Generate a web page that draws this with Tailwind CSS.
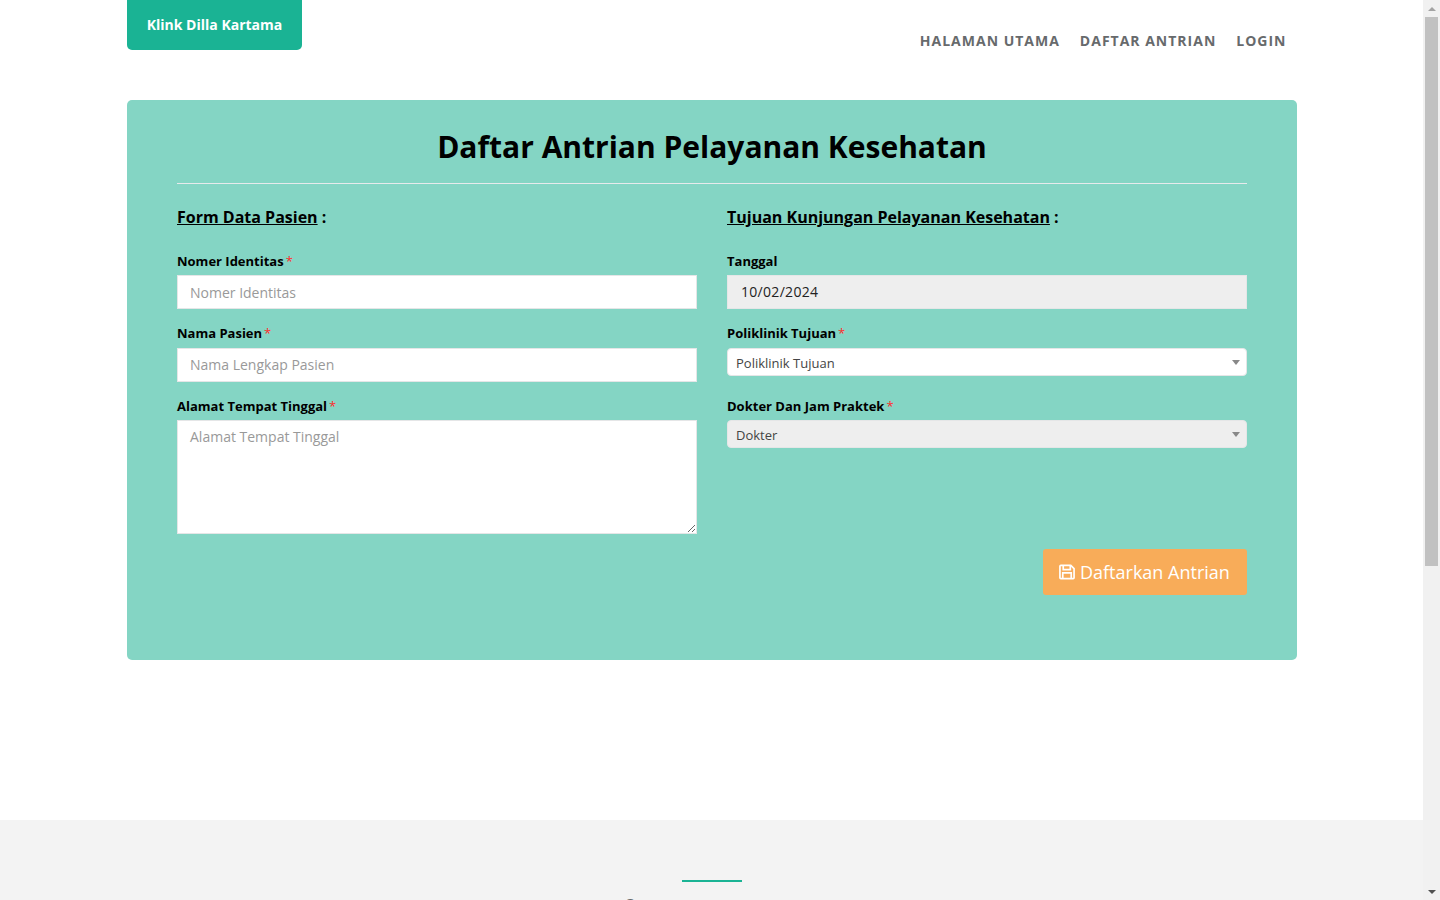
<!doctype html>
<html lang="id">
<head>
<meta charset="utf-8">
<title>Klinik Dilla Kartama</title>
<script src="https://cdn.jsdelivr.net/npm/@tailwindcss/browser@4"></script>
</head>
<body class="font-['Open_Sans',sans-serif] text-[14px] overflow-hidden">
<div class="flex h-[900px] w-[1440px] overflow-hidden">
  <main class="w-[1423px] h-[900px] overflow-hidden bg-white flex flex-col shrink-0">
    <header class="h-[100px] pl-[127px] pr-[136.5px] flex justify-between items-start shrink-0">
      <a class="w-[175px] h-[50px] pb-[2px] bg-[#1ab394] rounded-b-[5px] flex items-center justify-center text-white font-bold text-[14px]">Klink Dilla Kartama</a>
      <nav class="flex gap-[20px] pt-[31px] text-[14px] leading-[20px] font-bold tracking-[1px] text-[#676a6c]">
        <a>HALAMAN UTAMA</a>
        <a>DAFTAR ANTRIAN</a>
        <a>LOGIN</a>
      </nav>
    </header>
    <section class="ml-[127px] w-[1170px] h-[560px] shrink-0 bg-[#84d5c4] rounded-[5px] px-[50px] text-black">
      <h1 class="h-[84px] border-b border-[#e7eaec] text-center text-[30px] font-bold leading-[41px] pt-[26px]">Daftar Antrian Pelayanan Kesehatan</h1>
      <div class="grid grid-cols-2 gap-[30px]">
        <div>
          <h2 class="mt-[22px] h-[24px] text-[16px] font-bold leading-[22px]"><u>Form Data Pasien</u> :</h2>
          <label class="block mt-[21px] h-[24px] text-[13px] font-bold leading-[20px]">Nomer Identitas<span class="text-[#ff2a2a] font-normal ml-[2px]">*</span></label>
          <input class="block w-full h-[34px] border border-[#e5e6e7] bg-white px-[12px] text-[14px] text-[#676a6c] placeholder:text-[#999]" placeholder="Nomer Identitas">
          <label class="block mt-[14px] h-[25px] text-[13px] font-bold leading-[20px]">Nama Pasien<span class="text-[#ff2a2a] font-normal ml-[2px]">*</span></label>
          <input class="block w-full h-[34px] pb-[2px] border border-[#e5e6e7] bg-white px-[12px] text-[14px] text-[#676a6c] placeholder:text-[#999]" placeholder="Nama Lengkap Pasien">
          <label class="block mt-[14px] h-[24px] text-[13px] font-bold leading-[20px]">Alamat Tempat Tinggal<span class="text-[#ff2a2a] font-normal ml-[2px]">*</span></label>
          <textarea class="block w-full h-[114px] border border-[#e5e6e7] bg-white px-[12px] py-[6px] text-[14px] leading-[20px] text-[#676a6c] placeholder:text-[#999]" placeholder="Alamat Tempat Tinggal"></textarea>
        </div>
        <div>
          <h2 class="mt-[22px] h-[24px] text-[16px] font-bold leading-[22px]"><u>Tujuan Kunjungan Pelayanan Kesehatan</u> :</h2>
          <label class="block mt-[21px] h-[24px] text-[13px] font-bold leading-[20px]">Tanggal</label>
          <div class="h-[34px] pb-[2px] border border-[#e5e6e7] bg-[#eeeeee] pl-[13px] flex items-center text-[14px] tracking-[0.3px] text-[#222]">10/02/2024</div>
          <label class="block mt-[14px] h-[25px] text-[13px] font-bold leading-[20px]">Poliklinik Tujuan<span class="text-[#ff2a2a] font-normal ml-[2px]">*</span></label>
          <div class="h-[28px] border border-[#e5e6e7] rounded-[4px] bg-white pl-[8px] pr-[6px] flex items-center justify-between text-[13px] text-[#444]">
            <span class="pt-[4px]">Poliklinik Tujuan</span>
            <span class="w-0 h-0 border-x-[4px] border-x-transparent border-t-[5px] border-t-[#888]"></span>
          </div>
          <label class="block mt-[20px] h-[24px] text-[13px] font-bold leading-[20px]">Dokter Dan Jam Praktek<span class="text-[#ff2a2a] font-normal ml-[2px]">*</span></label>
          <div class="h-[28px] border border-[#e5e6e7] rounded-[4px] bg-[#eeeeee] pl-[8px] pr-[6px] flex items-center justify-between text-[13px] text-[#444]">
            <span class="pt-[4px]">Dokter</span>
            <span class="w-0 h-0 border-x-[4px] border-x-transparent border-t-[5px] border-t-[#888]"></span>
          </div>
        </div>
      </div>
      <div class="flex justify-end mt-[15px]">
        <button class="w-[204px] h-[46px] bg-[#f8ac59] rounded-[3px] text-white text-[18px] flex items-center pl-[16px] gap-[5px]">
          <svg class="w-[16px] h-[16px]" viewBox="0 0 17 16" fill="none" stroke="currentColor" stroke-width="1.8"><path d="M1 2a1 1 0 0 1 1-1h10.5l3.5 3.5v9.5a1 1 0 0 1-1 1h-13a1 1 0 0 1-1-1z"/><path d="M4.5 1v4.5h7.5v-4.5M4 15v-6h9v6"/></svg>
          <span>Daftarkan Antrian</span>
        </button>
      </div>
    </section>
    <div class="h-[160px] shrink-0"></div>
    <footer class="flex-1 bg-[#f3f3f3] flex flex-col items-center pt-[60px]">
      <div class="w-[60px] h-[2px] bg-[#1ab394]"></div>
      <p class="mt-[10px] text-[28px] leading-[34px] whitespace-nowrap text-[#676a6c]">Informasi Antrian</p>
    </footer>
  </main>
  <aside class="w-[17px] h-[900px] shrink-0 bg-[#f1f1f1] flex flex-col items-center">
    <div class="h-[17px] w-full flex items-center justify-center"><span class="w-0 h-0 border-x-[4px] border-x-transparent border-b-[4px] border-b-[#a3a3a3]"></span></div>
    <div class="h-[549px] w-[13px] bg-[#c1c1c1]"></div>
    <div class="flex-1"></div>
    <div class="h-[17px] w-full flex items-center justify-center"><span class="w-0 h-0 border-x-[4px] border-x-transparent border-t-[4px] border-t-[#505050]"></span></div>
  </aside>
</div>
</body>
</html>
